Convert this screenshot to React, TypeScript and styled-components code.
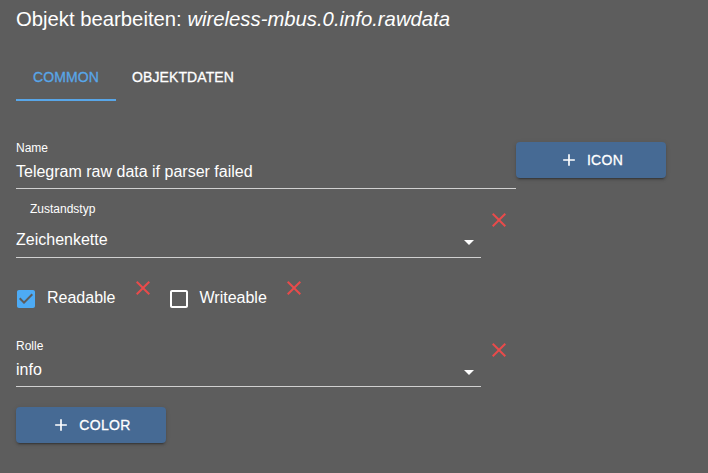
import React from 'react';
import styled, { createGlobalStyle } from 'styled-components';

const GlobalStyle = createGlobalStyle`
  html, body {
    margin: 0;
    padding: 0;
    background: #5d5d5d;
  }
  body {
    font-family: "Liberation Sans", Arial, sans-serif;
    color: #fff;
  }
`;

const Page = styled.div`
  height: 473px;
  padding: 7px 16px 0;
  box-sizing: border-box;
  background: #5d5d5d;
  overflow: hidden;
`;

const Title = styled.h2`
  margin: 0;
  font-size: 20.3px;
  line-height: 24px;
  font-weight: 400;
  em {
    font-style: italic;
  }
`;

const TabBar = styled.div`
  display: flex;
  margin-top: 22px;
`;

const Tab = styled.div<{ $active?: boolean }>`
  position: relative;
  height: 48px;
  min-width: 100px;
  padding: 0 16px;
  box-sizing: border-box;
  display: flex;
  align-items: center;
  justify-content: center;
  font-size: 14px;
  font-weight: 500;
  letter-spacing: 0.1px;
  text-transform: uppercase;
  -webkit-text-stroke: 0.3px currentColor;
  color: ${(p) => (p.$active ? '#58a6e8' : '#fff')};
  &::after {
    content: "";
    display: ${(p) => (p.$active ? 'block' : 'none')};
    position: absolute;
    left: 0;
    right: 0;
    bottom: 0;
    height: 2px;
    background: #58a6e8;
  }
`;

const Form = styled.div`
  display: flex;
  flex-direction: column;
  padding-top: 40px;
`;

const Row = styled.div<{ $mt?: number }>`
  display: flex;
  align-items: flex-start;
  margin-top: ${(p) => p.$mt ?? 0}px;
`;

const Field = styled.div<{ $width: number }>`
  position: relative;
  width: ${(p) => p.$width}px;
  border-bottom: 1px solid #d0d0d0;
`;

const Label = styled.div<{ $indent?: number }>`
  font-size: 12px;
  line-height: 14px;
  padding-left: ${(p) => p.$indent ?? 0}px;
`;

const Value = styled.div<{ $pt?: number; $pb?: number }>`
  font-size: 16px;
  line-height: 20px;
  padding: ${(p) => p.$pt ?? 7}px 0 ${(p) => p.$pb ?? 6}px;
`;

const Arrow = styled.svg<{ $top: number }>`
  position: absolute;
  right: 0;
  top: ${(p) => p.$top}px;
  width: 24px;
  height: 24px;
  fill: #fff;
`;

const DeleteIcon = styled.svg<{ $ml?: number; $mt?: number }>`
  flex: none;
  width: 24px;
  height: 24px;
  margin-left: ${(p) => p.$ml ?? 0}px;
  margin-top: ${(p) => p.$mt ?? 0}px;
  fill: #e84b4b;
`;

const Button = styled.button<{ $mt?: number }>`
  flex: none;
  width: 150px;
  height: 36px;
  margin-top: ${(p) => p.$mt ?? 0}px;
  border: none;
  border-radius: 4px;
  background: #466a94;
  color: #fff;
  font-family: inherit;
  font-size: 14px;
  font-weight: 500;
  letter-spacing: 0.3px;
  text-transform: uppercase;
  -webkit-text-stroke: 0.3px currentColor;
  display: flex;
  align-items: center;
  justify-content: center;
  gap: 8px;
  box-shadow: 0 3px 1px -2px rgba(0, 0, 0, 0.2), 0 2px 2px 0 rgba(0, 0, 0, 0.14),
    0 1px 5px 0 rgba(0, 0, 0, 0.12);
  svg {
    width: 20px;
    height: 20px;
    fill: #fff;
  }
`;

const CheckRow = styled.div`
  display: flex;
  align-items: flex-start;
  margin-top: 18px;
  margin-left: -2px;
`;

const CheckBox = styled.svg<{ $checked?: boolean; $ml?: number }>`
  flex: none;
  width: 24px;
  height: 24px;
  margin-top: 11px;
  margin-left: ${(p) => p.$ml ?? 0}px;
  fill: ${(p) => (p.$checked ? '#4dabf5' : '#fff')};
`;

const CheckLabel = styled.span`
  font-size: 16px;
  line-height: 20px;
  margin: 12px 15px 0 9px;
`;

const arrowPath = 'M7 10l5 5 5-5z';
const closePath =
  'M19 6.41L17.59 5 12 10.59 6.41 5 5 6.41 10.59 12 5 17.59 6.41 19 12 13.41 17.59 19 19 17.59 13.41 12z';
const addPath = 'M19 13h-6v6h-2v-6H5v-2h6V5h2v6h6v2z';
const checkedPath =
  'M19 3H5c-1.11 0-2 .9-2 2v14c0 1.1.89 2 2 2h14c1.11 0 2-.9 2-2V5c0-1.1-.89-2-2-2zm-9 14l-5-5 1.41-1.41L10 14.17l7.59-7.59L19 8l-9 9z';
const uncheckedPath =
  'M19 5v14H5V5h14m0-2H5c-1.1 0-2 .9-2 2v14c0 1.1.9 2 2 2h14c1.1 0 2-.9 2-2V5c0-1.1-.9-2-2-2z';

const Close = ({ ml, mt }: { ml?: number; mt?: number }) => (
  <DeleteIcon viewBox="0 0 24 24" $ml={ml} $mt={mt}>
    <path d={closePath} />
  </DeleteIcon>
);

const Plus = () => (
  <svg viewBox="0 0 24 24">
    <path d={addPath} />
  </svg>
);

const App: React.FC = () => {
  return (
    <Page>
      <GlobalStyle />
      <Title>
        Objekt bearbeiten: <em>wireless-mbus.0.info.rawdata</em>
      </Title>
      <TabBar>
        <Tab $active>Common</Tab>
        <Tab>Objektdaten</Tab>
      </TabBar>
      <Form>
        <Row>
          <Field $width={500}>
            <Label>Name</Label>
            <Value>Telegram raw data if parser failed</Value>
          </Field>
          <Button $mt={1}>
            <Plus />
            Icon
          </Button>
        </Row>
        <Row $mt={13}>
          <Field $width={465}>
            <Label $indent={14}>Zustandstyp</Label>
            <Value $pt={14} $pb={7}>Zeichenkette</Value>
            <Arrow viewBox="0 0 24 24" $top={28}>
              <path d={arrowPath} />
            </Arrow>
          </Field>
          <Close ml={6} mt={6} />
        </Row>
        <CheckRow>
          <CheckBox viewBox="0 0 24 24" $checked>
            <path d={checkedPath} />
          </CheckBox>
          <CheckLabel>Readable</CheckLabel>
          <Close />
          <CheckBox viewBox="0 0 24 24" $ml={12}>
            <path d={uncheckedPath} />
          </CheckBox>
          <CheckLabel>Writeable</CheckLabel>
          <Close />
        </CheckRow>
        <Row $mt={28}>
          <Field $width={465}>
            <Label>Rolle</Label>
            <Value>info</Value>
            <Arrow viewBox="0 0 24 24" $top={21}>
              <path d={arrowPath} />
            </Arrow>
          </Field>
          <Close ml={6} mt={-1} />
        </Row>
        <Button $mt={20}>
          <Plus />
          Color
        </Button>
      </Form>
    </Page>
  );
};

export default App;
